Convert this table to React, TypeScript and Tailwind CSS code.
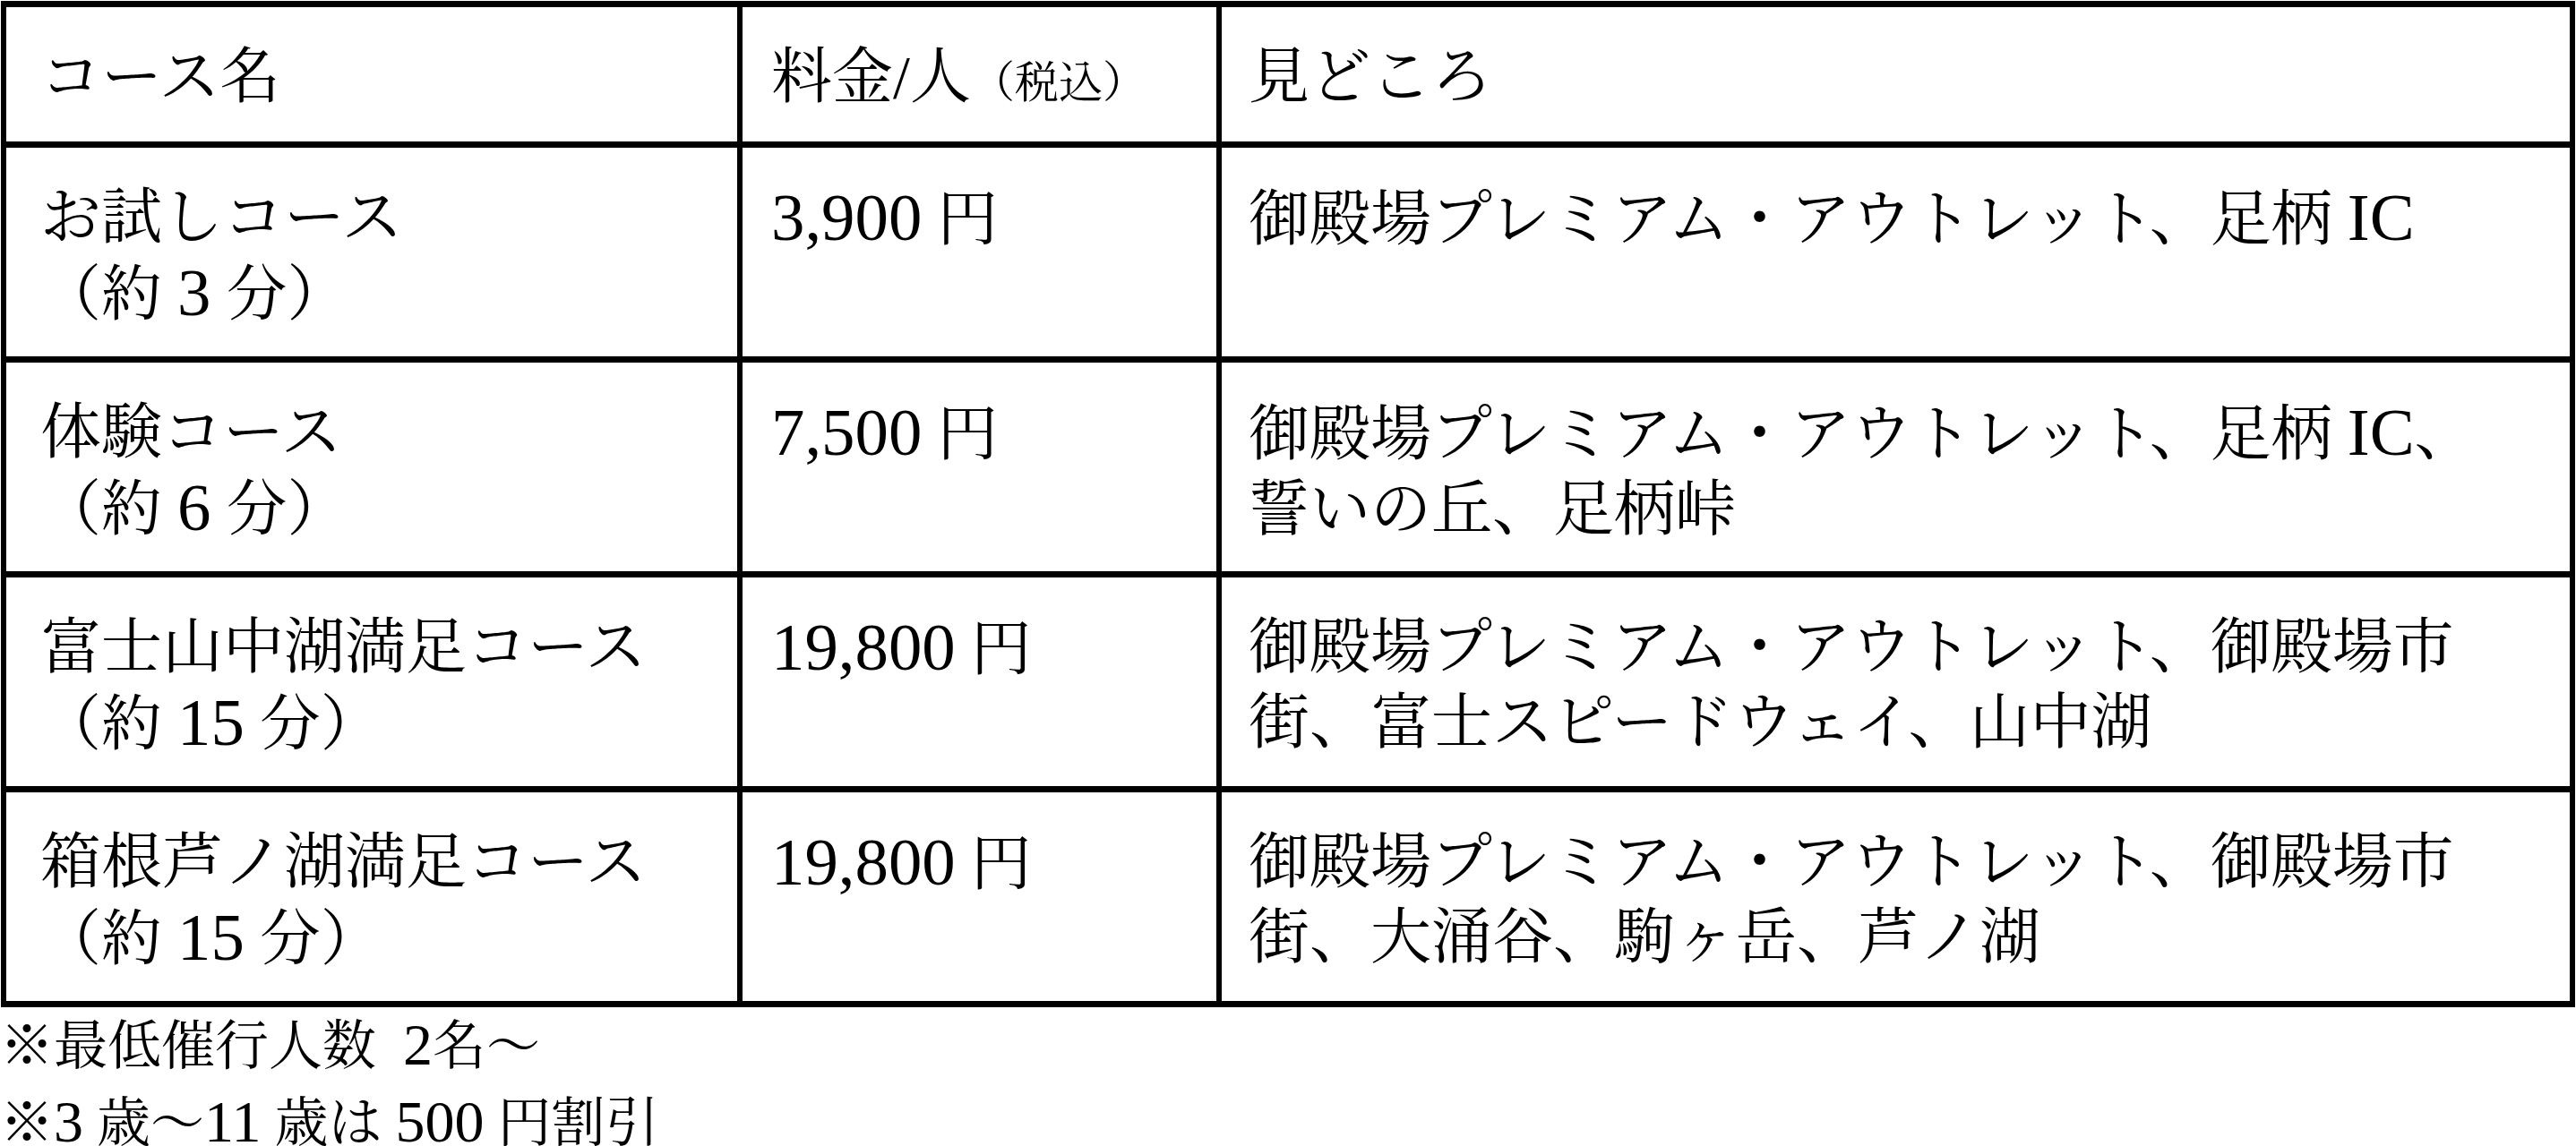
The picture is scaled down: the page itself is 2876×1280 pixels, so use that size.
const rows = [
  {
    name: "お試しコース",
    time: "（約 3 分）",
    price: "3,900 円",
    spots: ["御殿場プレミアム・アウトレット、足柄 IC"],
  },
  {
    name: "体験コース",
    time: "（約 6 分）",
    price: "7,500 円",
    spots: ["御殿場プレミアム・アウトレット、足柄 IC、", "誓いの丘、足柄峠"],
  },
  {
    name: "富士山中湖満足コース",
    time: "（約 15 分）",
    price: "19,800 円",
    spots: ["御殿場プレミアム・アウトレット、御殿場市", "街、富士スピードウェイ、山中湖"],
  },
  {
    name: "箱根芦ノ湖満足コース",
    time: "（約 15 分）",
    price: "19,800 円",
    spots: ["御殿場プレミアム・アウトレット、御殿場市", "街、大涌谷、駒ヶ岳、芦ノ湖"],
  },
]

// latin runs (digits, IC) are set a bit larger so they read like the wider Century figures
function T({ s }: { s: string }) {
  return (
    <>
      {s.split(/([0-9A-Z,]+)/).map((p, i) =>
        /[0-9A-Z]/.test(p) ? (
          <span key={i} className="text-[1.1em]">
            {p}
          </span>
        ) : (
          p
        )
      )}
    </>
  )
}

const cell = "border-r-[6px] border-b-[7px] border-black pt-[36px] leading-[84px]"

export default function App() {
  return (
    <div className="min-h-screen w-full bg-white text-black [font-family:'Liberation_Serif','Noto_Serif_CJK_JP','Noto_Sans_CJK_JP',serif] text-[68px]">
      {/* Table */}
      <div className="ml-px mt-px w-[2874px] border-l-[6px] border-t-[7px] border-black grid grid-cols-[822px_535px_1fr]">
        <div className={`${cell} h-[157px] pl-[38px]`}>コース名</div>
        <div className={`${cell} h-[157px] pl-[32px]`}>
          料金/人<span className="text-[49px]">（税込）</span>
        </div>
        <div className={`${cell} h-[157px] pl-[30px]`}>見どころ</div>

        {rows.map((r) => (
          <div key={r.name} className="contents">
            <div className={`${cell} h-[240px] pl-[38px]`}>
              <div>{r.name}</div>
              <div>
                <T s={r.time} />
              </div>
            </div>
            <div className={`${cell} h-[240px] pl-[32px]`}>
              <T s={r.price} />
            </div>
            <div className={`${cell} h-[240px] pl-[30px] whitespace-nowrap`}>
              {r.spots.map((s) => (
                <div key={s}>
                  <T s={s} />
                </div>
              ))}
            </div>
          </div>
        ))}
      </div>

      {/* Notes */}
      <div className="text-[60px] leading-[84px]">
        <div>
          <T s={"※最低催行人数\u20022名～"} />
        </div>
        <div>
          <T s="※3 歳～11 歳は 500 円割引" />
        </div>
      </div>
    </div>
  )
}
